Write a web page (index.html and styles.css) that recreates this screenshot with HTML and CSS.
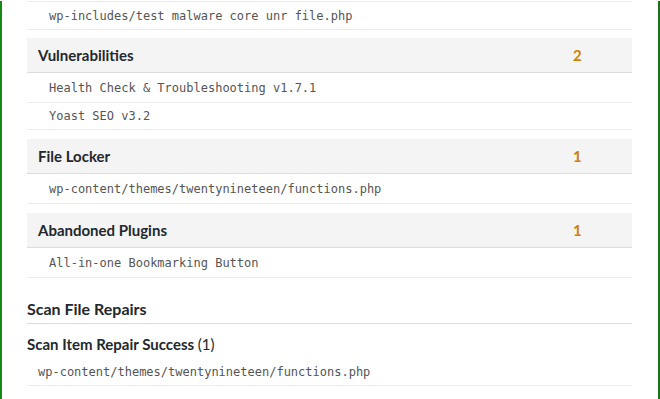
FILE: index.html
```html
<!DOCTYPE html>
<html lang="en">
<head>
    <meta charset="UTF-8">
    <meta name="viewport" content="width=device-width, initial-scale=1.0">
    <title>Scan Results</title>
    <link rel="stylesheet" href="styles.css">
</head>
<body>
    <div class="frame">
        <table class="group first">
            <tr class="item"><td colspan="2">wp-includes/test malware core unr file.php</td></tr>
        </table>

        <table class="group">
            <tr class="head"><th>Vulnerabilities</th><th class="count">2</th></tr>
            <tr class="item"><td colspan="2">Health Check &amp; Troubleshooting v1.7.1</td></tr>
            <tr class="item"><td colspan="2">Yoast SEO v3.2</td></tr>
        </table>

        <table class="group">
            <tr class="head"><th>File Locker</th><th class="count">1</th></tr>
            <tr class="item"><td colspan="2">wp-content/themes/twentynineteen/functions.php</td></tr>
        </table>

        <table class="group">
            <tr class="head"><th>Abandoned Plugins</th><th class="count">1</th></tr>
            <tr class="item"><td colspan="2">All-in-one Bookmarking Button</td></tr>
        </table>

        <h3 class="section-title">Scan File Repairs</h3>
        <h4 class="sub-title">Scan Item Repair Success <span class="num">(1)</span></h4>
        <table class="group repairs">
            <tr class="item"><td>wp-content/themes/twentynineteen/functions.php</td></tr>
        </table>
    </div>
</body>
</html>
```

FILE: styles.css
```css
body {
    margin: 0;
    font-family: "Open Sans", "Noto Sans", sans-serif;
    color: #23282d;
    background: #fff;
}
.frame {
    min-height: 100vh;
    box-sizing: border-box;
    border-left: 2px solid #138a13;
    border-right: 2px solid #1b6e1b;
    padding: 0 26px 1px 25px;
}
.group {
    width: 100%;
    border-collapse: collapse;
    margin-bottom: 9px;
}
.group.first {
    border-top: 1px solid #ebebeb;
    margin-top: 1px;
    margin-bottom: 8px;
}
.group.first .item td {
    height: 27px;
}
.head th {
    background: #f4f4f4;
    border-bottom: 1px solid #dcdcdc;
    height: 34px;
    padding: 0 11px;
    text-align: left;
    font-family: Lato, "Open Sans", sans-serif;
    font-size: 15px;
    font-weight: 700;
}
.head .count {
    width: 48px;
    color: #cf8200;
}
.item td {
    font-family: "DejaVu Sans Mono", monospace;
    font-size: 12px;
    color: #555;
    height: 26px;
    padding: 0 22px;
    border-bottom: 1px solid #ebebeb;
}
.head + .item td {
    height: 29px;
}
.section-title {
    margin: 21px 0 0;
    padding-bottom: 5px;
    border-bottom: 1px solid #dcdcdc;
    font-family: Lato, "Open Sans", sans-serif;
    font-size: 16px;
    font-weight: 700;
}
.sub-title {
    margin: 11px 0 5px;
    font-family: Lato, "Open Sans", sans-serif;
    font-size: 15px;
    font-weight: 700;
}
.sub-title .num {
    font-weight: 400;
}
.repairs .item td {
    padding: 0 11px;
    height: 27px;
}
```
